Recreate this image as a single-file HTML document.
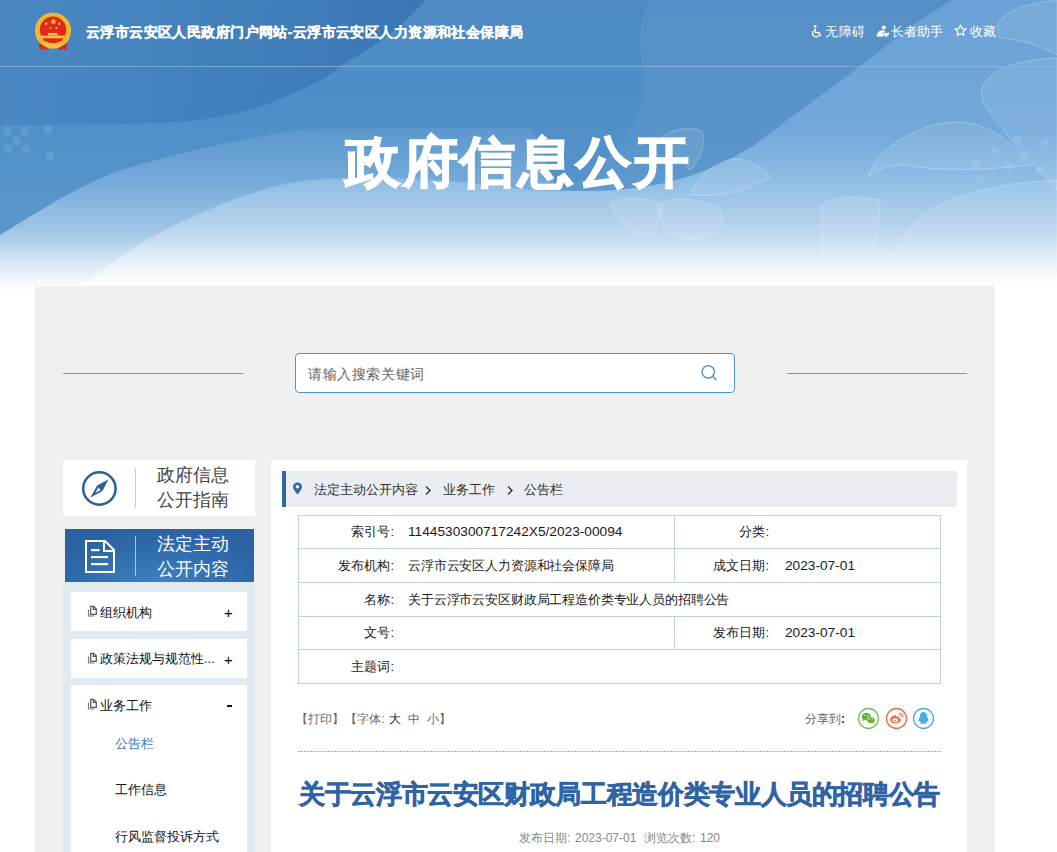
<!DOCTYPE html>
<html><head><meta charset="utf-8">
<style>
*{margin:0;padding:0;box-sizing:border-box}
html,body{width:1057px;height:852px;overflow:hidden;background:#fff}
body{font-family:"Liberation Sans",sans-serif;position:relative;color:#333}
.abs{position:absolute}
#banner{left:0;top:0;width:1057px;height:290px;overflow:hidden;
 background:linear-gradient(180deg,#4c88c2 0px,#4f8cc5 120px,#6ea1d2 175px,#a9c8e6 222px,#e4eef8 262px,#ffffff 288px)}
.t{position:absolute;white-space:nowrap;line-height:1}
#panel{left:35px;top:286px;width:960px;height:566px;background:#f0f0f0}
.side{font-size:13px;color:#111}
.cell{position:absolute;font-size:13px;color:#1a1a1a;line-height:1;white-space:nowrap}
.hl{position:absolute;height:1px;background:#b9d2e8}
.vl{position:absolute;width:1px;background:#b9d2e8}
</style></head><body>
<div id="banner" class="abs">
<svg width="1057" height="290" viewBox="0 0 1057 290" style="position:absolute;left:0;top:0">
 <defs>
  <linearGradient id="g0" gradientUnits="userSpaceOnUse" x1="0" y1="0" x2="0" y2="290">
   <stop offset="0" stop-color="#6aa1d6"/>
   <stop offset="0.45" stop-color="#72a8da"/>
   <stop offset="0.62" stop-color="#8ebde4"/>
   <stop offset="0.76" stop-color="#b2d0ec"/>
   <stop offset="0.86" stop-color="#cfe2f3"/>
   <stop offset="0.97" stop-color="#f4f8fc"/>
   <stop offset="1" stop-color="#ffffff"/>
  </linearGradient>
  <linearGradient id="g1" gradientUnits="userSpaceOnUse" x1="0" y1="0" x2="0" y2="290">
   <stop offset="0" stop-color="#5893ca"/>
   <stop offset="0.45" stop-color="#5d98cd"/>
   <stop offset="0.62" stop-color="#74a9d9"/>
   <stop offset="0.8" stop-color="#a3c7e8"/>
   <stop offset="0.95" stop-color="#d9e8f5"/>
  </linearGradient>
  <linearGradient id="g2" gradientUnits="userSpaceOnUse" x1="0" y1="0" x2="0" y2="290">
   <stop offset="0" stop-color="#4d8ac4"/>
   <stop offset="0.5" stop-color="#5190c8"/>
   <stop offset="0.7" stop-color="#5a96cc"/>
  </linearGradient>
  <linearGradient id="gd" gradientUnits="userSpaceOnUse" x1="0" y1="20" x2="400" y2="60">
   <stop offset="0" stop-color="#4b88c2"/>
   <stop offset="0.6" stop-color="#4280bc"/>
   <stop offset="1" stop-color="#3b77b5"/>
  </linearGradient>
  <linearGradient id="fade" gradientUnits="userSpaceOnUse" x1="0" y1="0" x2="0" y2="290">
   <stop offset="0" stop-color="#fff" stop-opacity="0"/>
   <stop offset="0.82" stop-color="#fff" stop-opacity="0"/>
   <stop offset="0.93" stop-color="#fff" stop-opacity="0.35"/>
   <stop offset="1" stop-color="#fff" stop-opacity="0.95"/>
  </linearGradient>
 </defs>
 <rect width="1057" height="290" fill="url(#g0)"/>
 <path d="M0,0 H952 L912,25 C870,60 800,110 754,145 C700,180 620,195 530,190 C420,175 350,176 300,181 C250,190 200,212 150,238 C120,255 95,275 75,292 L0,292 Z" fill="url(#g1)"/>
 <path d="M0,0 H952 L912,25 C870,60 800,110 754,145 C700,180 640,195 557,190 C545,160 540,140 530,128 C420,128 340,128 300,130 C230,140 170,155 121,170 C80,185 40,210 0,235 Z" fill="url(#g2)"/>
 <path d="M649,0 C630,40 650,80 640,110 C625,150 590,180 557,190 C640,195 700,180 754,145 C800,110 870,60 912,25 L952,0 Z" fill="#ffffff" opacity="0.05"/>
 <g fill="#ffffff" fill-opacity="0.09" stroke="#ffffff" stroke-opacity="0.25" stroke-width="1">
  <path d="M1000,38 C990,20 1010,5 1057,0 V55 C1040,45 1020,40 1000,38 Z"/>
  <path d="M983,102 C975,80 1000,60 1057,58 V190 C1030,160 1000,130 983,102 Z"/>
  <path d="M868,177 C880,145 920,122 960,122 C990,124 1010,140 1030,165 C990,170 940,172 905,165 C890,165 875,170 868,177 Z"/>
  <path d="M905,235 C930,200 980,185 1057,180 V290 H880 C885,270 895,250 905,235 Z"/>
  <path d="M822,205 C840,195 860,197 880,200 C880,240 870,270 860,290 H822 Z"/>
  <path d="M663,136 C675,128 695,126 702,132 C706,145 700,160 690,170 C680,160 670,148 663,136 Z"/>
  <path d="M690,195 C700,170 725,155 745,160 C760,165 768,172 770,177 C750,190 720,198 690,195 Z"/>
  <path d="M657,205 C670,195 700,198 720,210 C728,225 715,240 690,240 C670,238 658,225 657,205 Z"/>
  <path d="M610,204 C625,195 650,198 663,205 C660,220 655,232 645,238 C628,228 615,218 610,204 Z"/>
 </g>
 <g fill="#ffffff" fill-opacity="0.1">
  <circle cx="1018" cy="140" r="4"/><circle cx="1045" cy="142" r="4"/><circle cx="995" cy="150" r="4"/><circle cx="1025" cy="155" r="4"/>
  <circle cx="975" cy="163" r="4"/><circle cx="1010" cy="168" r="4"/><circle cx="980" cy="180" r="4"/><circle cx="1040" cy="170" r="4"/>
  <circle cx="7" cy="131" r="4.5"/><circle cx="25" cy="131" r="4.5"/><circle cx="48" cy="130" r="4.5"/><circle cx="17" cy="141" r="4.5"/><circle cx="26" cy="149" r="4.5"/><circle cx="50" cy="156" r="4.5"/><circle cx="8" cy="149" r="4.5"/>
 </g>
 <path d="M0,0 H425 C400,30 370,50 346,62 C330,75 315,85 300,90 C250,115 200,123 150,123 C100,125 50,125 0,125 Z" fill="url(#gd)"/>
 <rect width="1057" height="290" fill="url(#fade)"/>
 <line x1="0" y1="66.5" x2="1057" y2="66.5" stroke="#8dbbe4" stroke-opacity="0.7" stroke-width="1"/>
</svg>
</div>
<!-- header -->
<svg class="abs" style="left:30px;top:8px" width="46" height="46" viewBox="0 0 46 46">
 <path d="M10 32 L9 41.8 L13.5 40.5 L16.5 42.5 L19 36 Z" fill="#d9241b"/>
 <path d="M36 32 L37 41.8 L32.5 40.5 L29.5 42.5 L27 36 Z" fill="#d9241b"/>
 <circle cx="23" cy="22.6" r="17.9" fill="#f1b62c"/>
 <circle cx="23" cy="22.6" r="17.4" fill="none" stroke="#f8d456" stroke-width="1.2" stroke-dasharray="1.2 1.6" opacity="0.8"/>
 <circle cx="23" cy="21.8" r="13.2" fill="#e1271e"/>
 <rect x="18" y="25" width="9.6" height="2.3" fill="#f6c93e"/>
 <rect x="11.3" y="27.6" width="23.4" height="2.9" fill="#f6c63a"/>
 <path d="M12.5 30.5 H33.5 L31.5 33.6 H14.5 Z" fill="#e1271e"/>
 <path d="M15 34.5 Q23 39 31 34.5 L30 38.5 Q23 42.5 16 38.5 Z" fill="#f4c235"/>
 <path d="M23.4 10.3 L24.3 12.5 L26.7 12.6 L24.9 14.1 L25.5 16.4 L23.4 15.1 L21.3 16.4 L21.9 14.1 L20.1 12.6 L22.5 12.5 Z" fill="#f7d23e"/>
 <circle cx="16.2" cy="15.7" r="1.2" fill="#f7d23e"/>
 <circle cx="29.4" cy="15.7" r="1.2" fill="#f7d23e"/>
 <circle cx="20.5" cy="20" r="1" fill="#f2c438"/>
 <circle cx="26.5" cy="20" r="1" fill="#f2c438"/>
</svg>
<div class="t" style="left:86px;top:25px;font-size:14px;font-weight:bold;color:#fff;letter-spacing:0.41px;-webkit-text-stroke:0.3px #fff">云浮市云安区人民政府门户网站-云浮市云安区人力资源和社会保障局</div>
<svg class="abs" style="left:810px;top:24px" width="14" height="14" viewBox="0 0 14 14">
 <circle cx="5.2" cy="2.2" r="1.3" fill="#fff"/>
 <path d="M5.2 4.2 V8.6 H9 L10.8 12.2" fill="none" stroke="#fff" stroke-width="1.4" stroke-linejoin="round"/>
 <path d="M3.6 6.6 A3.6 3.6 0 1 0 9.2 11" fill="none" stroke="#fff" stroke-width="1.3"/>
</svg>
<div class="t" style="left:825px;top:25px;font-size:13px;color:#fff;letter-spacing:0.5px">无障碍</div>
<svg class="abs" style="left:876px;top:25px" width="14" height="13" viewBox="0 0 14 13">
 <circle cx="7.8" cy="2.5" r="2.1" fill="#fff"/>
 <path d="M0.6 11.6 C0.9 8.6 2.6 5.4 6.2 5.2 C7.6 5.1 8.6 5.6 9.2 6.4 L7.6 11.6 Z" fill="#fff"/>
 <path d="M10.2 12.6 L7.3 9.8 C6.3 8.8 6.9 7.2 8.2 7.2 C9.1 7.2 9.8 7.8 10.2 8.4 C10.6 7.8 11.3 7.2 12.2 7.2 C13.5 7.2 14.1 8.8 13.1 9.8 Z" fill="#fff" stroke="#5e98cd" stroke-width="0.8"/>
</svg>
<div class="t" style="left:891px;top:25px;font-size:13px;color:#fff">长者助手</div>
<svg class="abs" style="left:954px;top:24px" width="13" height="13" viewBox="0 0 13 13">
 <path d="M6.5 1 L8.1 4.6 L12 5 L9.1 7.6 L9.9 11.5 L6.5 9.5 L3.1 11.5 L3.9 7.6 L1 5 L4.9 4.6 Z" fill="none" stroke="#fff" stroke-width="1.2" stroke-linejoin="round"/>
</svg>
<div class="t" style="left:970px;top:25px;font-size:13px;color:#fff">收藏</div>
<div class="t" style="left:345px;top:135px;font-size:55px;font-weight:bold;color:#fff;letter-spacing:2.7px;-webkit-text-stroke:1.5px #fff">政府信息公开</div>

<div id="panel" class="abs"></div>
<!-- search -->
<div class="abs" style="left:63px;top:373px;width:180px;height:1px;background:#5b9bd0"></div>
<div class="abs" style="left:787px;top:373px;width:180px;height:1px;background:#5b9bd0"></div>
<div class="abs" style="left:295px;top:353px;width:440px;height:40px;border:1px solid #4d93cc;border-radius:4px;background:#fff"></div>
<div class="t" style="left:308px;top:367px;font-size:14px;color:#666;letter-spacing:0.6px">请输入搜索关键词</div>
<svg class="abs" style="left:700px;top:364px" width="18" height="18" viewBox="0 0 18 18"><circle cx="8.3" cy="7.8" r="6.2" fill="none" stroke="#4b90c9" stroke-width="1.4"/><line x1="12.6" y1="12.2" x2="16" y2="15.6" stroke="#4b90c9" stroke-width="1.4" stroke-linecap="round"/></svg>

<!-- sidebar -->
<div class="abs" style="left:63px;top:460px;width:192px;height:56px;background:#fff"></div>
<svg class="abs" style="left:80px;top:469px" width="40" height="40" viewBox="0 0 40 40">
 <circle cx="19.4" cy="19.5" r="16.2" fill="none" stroke="#2b6099" stroke-width="2.5"/>
 <polygon points="28.5,10.5 17,16.5 22.5,22" fill="#2b6099"/>
 <polygon points="17,16.5 22.5,22 10.5,28.5" fill="#2b6099"/>
 <polygon points="18.2,18.8 20.6,21.1 15.5,23.8" fill="#fff"/>
</svg>
<div class="abs" style="left:135px;top:468px;width:1px;height:40px;background:#d0d0d0"></div>
<div class="t" style="left:157px;top:463px;font-size:18px;color:#444;line-height:25px">政府信息<br>公开指南</div>

<div class="abs" style="left:65px;top:529px;width:189px;height:53px;background:radial-gradient(ellipse 120px 60px at 95px 60px,#3f86c9 0%,#3270b0 55%,#2c62a2 100%)"></div>
<svg class="abs" style="left:84px;top:539px" width="32" height="36" viewBox="0 0 32 36">
 <path d="M2 2 H21 L30 11 V33 H2 Z" fill="none" stroke="#fff" stroke-width="2"/>
 <path d="M20 2 V12 H30" fill="none" stroke="#fff" stroke-width="2"/>
 <rect x="7" y="10" width="8.5" height="2.2" fill="#fff"/>
 <rect x="7" y="17" width="17" height="2.2" fill="#fff"/>
 <rect x="7" y="24" width="17" height="2.2" fill="#fff"/>
</svg>
<div class="abs" style="left:135px;top:536px;width:1px;height:40px;background:rgba(230,220,200,0.8)"></div>
<div class="t" style="left:157px;top:532px;font-size:18px;color:#fff;line-height:25px">法定主动<br>公开内容</div>

<div class="abs" style="left:63px;top:582px;width:192px;height:270px;background:#e1eaf0"></div>
<div class="abs" style="left:71px;top:592px;width:176px;height:39px;background:#fff"></div>
<div class="abs" style="left:71px;top:639px;width:176px;height:39px;background:#fff"></div>
<div class="abs" style="left:71px;top:685px;width:176px;height:200px;background:#fff"></div>
<svg class="abs" style="left:87px;top:605px" width="11" height="12" viewBox="0 0 11 12"><path d="M3.7 1.4 H6.6 L9.3 4.1 V9.3 H3.7 Z" fill="none" stroke="#555" stroke-width="1.2"/><path d="M6.3 1.4 V4.4 H9.3" fill="none" stroke="#555" stroke-width="1.2"/><path d="M1.5 4.6 V11 H7.4" fill="none" stroke="#7a7a7a" stroke-width="1.2"/></svg>
<div class="t side" style="left:100px;top:606px">组织机构</div>
<div class="t side" style="left:224px;top:605px;font-size:15px;color:#000">+</div>
<svg class="abs" style="left:87px;top:652px" width="11" height="12" viewBox="0 0 11 12"><path d="M3.7 1.4 H6.6 L9.3 4.1 V9.3 H3.7 Z" fill="none" stroke="#555" stroke-width="1.2"/><path d="M6.3 1.4 V4.4 H9.3" fill="none" stroke="#555" stroke-width="1.2"/><path d="M1.5 4.6 V11 H7.4" fill="none" stroke="#7a7a7a" stroke-width="1.2"/></svg>
<div class="t side" style="left:100px;top:652px">政策法规与规范性...</div>
<div class="t side" style="left:224px;top:652px;font-size:15px;color:#000">+</div>
<svg class="abs" style="left:87px;top:698px" width="11" height="12" viewBox="0 0 11 12"><path d="M3.7 1.4 H6.6 L9.3 4.1 V9.3 H3.7 Z" fill="none" stroke="#555" stroke-width="1.2"/><path d="M6.3 1.4 V4.4 H9.3" fill="none" stroke="#555" stroke-width="1.2"/><path d="M1.5 4.6 V11 H7.4" fill="none" stroke="#7a7a7a" stroke-width="1.2"/></svg>
<div class="t side" style="left:100px;top:699px">业务工作</div>
<div class="abs" style="left:227px;top:705px;width:5px;height:2px;background:#111"></div>
<div class="t side" style="left:115px;top:737px;color:#3b79b7">公告栏</div>
<div class="t side" style="left:115px;top:783px">工作信息</div>
<div class="t side" style="left:115px;top:830px">行风监督投诉方式</div>

<!-- content -->
<div class="abs" style="left:271px;top:460px;width:696px;height:392px;background:#fff"></div>
<div class="abs" style="left:282px;top:471px;width:675px;height:36px;background:#eaeef2;border-left:4px solid #2e67a3"></div>
<svg class="abs" style="left:292px;top:482px" width="11" height="13" viewBox="0 0 11 13"><path d="M5.5 0.5C2.8 0.5 1 2.4 1 4.8 1 7.6 5.5 12.5 5.5 12.5S10 7.6 10 4.8C10 2.4 8.2 0.5 5.5 0.5Z" fill="#2e6aa6"/><circle cx="5.5" cy="4.7" r="1.8" fill="#fff"/></svg>
<div class="t" style="left:314px;top:483px;font-size:13px;color:#333">法定主动公开内容</div>
<svg class="abs" style="left:424px;top:485px" width="8" height="11" viewBox="0 0 8 11"><path d="M2 1.5 L6 5.5 L2 9.5" fill="none" stroke="#333" stroke-width="1.4"/></svg>
<div class="t" style="left:443px;top:483px;font-size:13px;color:#333">业务工作</div>
<svg class="abs" style="left:506px;top:485px" width="8" height="11" viewBox="0 0 8 11"><path d="M2 1.5 L6 5.5 L2 9.5" fill="none" stroke="#333" stroke-width="1.4"/></svg>
<div class="t" style="left:524px;top:483px;font-size:13px;color:#333">公告栏</div>

<!-- table -->
<div class="hl" style="left:298px;top:515px;width:643px"></div>
<div class="hl" style="left:298px;top:548px;width:643px"></div>
<div class="hl" style="left:298px;top:582px;width:643px"></div>
<div class="hl" style="left:298px;top:616px;width:643px"></div>
<div class="hl" style="left:298px;top:649px;width:643px"></div>
<div class="hl" style="left:298px;top:683px;width:643px"></div>
<div class="vl" style="left:298px;top:515px;height:169px"></div>
<div class="vl" style="left:940px;top:515px;height:169px"></div>
<div class="vl" style="left:674px;top:515px;height:68px"></div>
<div class="vl" style="left:674px;top:616px;height:34px"></div>

<div class="cell" style="right:663px;top:525px">索引号:</div>
<div class="cell" style="left:408px;top:525px;font-size:13.7px">1144530300717242X5/2023-00094</div>
<div class="cell" style="right:288px;top:525px">分类:</div>
<div class="cell" style="right:663px;top:559px">发布机构:</div>
<div class="cell" style="left:408px;top:559px;letter-spacing:-0.15px">云浮市云安区人力资源和社会保障局</div>
<div class="cell" style="right:288px;top:559px">成文日期:</div>
<div class="cell" style="left:785px;top:559px;font-size:13.7px">2023-07-01</div>
<div class="cell" style="right:663px;top:593px">名称:</div>
<div class="cell" style="left:408px;top:593px;letter-spacing:-0.15px">关于云浮市云安区财政局工程造价类专业人员的招聘公告</div>
<div class="cell" style="right:663px;top:626px">文号:</div>
<div class="cell" style="right:288px;top:626px">发布日期:</div>
<div class="cell" style="left:785px;top:626px;font-size:13.7px">2023-07-01</div>
<div class="cell" style="right:663px;top:660px">主题词:</div>

<!-- tools -->
<div class="t" style="left:296px;top:713px;font-size:12px;color:#666">【打印】</div>
<div class="t" style="left:345px;top:713px;font-size:12px;color:#666;letter-spacing:0.2px">【字体: <span style="color:#222">大</span>&nbsp; 中&nbsp; 小】</div>
<div class="t" style="left:805px;top:713px;font-size:12px;color:#666">分享到<b style="color:#222">:</b></div>
<svg class="abs" style="left:857px;top:707px" width="23" height="23" viewBox="0 0 23 23">
 <circle cx="11.5" cy="11.5" r="10" fill="none" stroke="#77c258" stroke-width="1.3"/>
 <ellipse cx="9.3" cy="9.6" rx="4.6" ry="3.8" fill="#62b23f"/>
 <path d="M6 12 L5.4 14.2 L8 12.8 Z" fill="#62b23f"/>
 <ellipse cx="14" cy="13.2" rx="4.2" ry="3.4" fill="#fff"/>
 <ellipse cx="14" cy="13.2" rx="3.7" ry="3" fill="#62b23f"/>
 <path d="M16.5 15 L17.4 17 L15 15.8 Z" fill="#62b23f"/>
 <circle cx="7.8" cy="8.6" r="0.6" fill="#fff"/><circle cx="10.8" cy="8.6" r="0.6" fill="#fff"/>
 <circle cx="12.7" cy="12.6" r="0.5" fill="#fff"/><circle cx="15.3" cy="12.6" r="0.5" fill="#fff"/>
</svg>
<svg class="abs" style="left:885px;top:707px" width="23" height="23" viewBox="0 0 23 23">
 <circle cx="11.5" cy="11.5" r="10" fill="none" stroke="#f26a3c" stroke-width="1.3"/>
 <path d="M10 8.2 C7 8.5 4.8 11 5.3 13.5 C5.8 16 9 16.8 11.5 16.3 C14.8 15.6 16.5 13.5 15.6 12 C15.2 11.3 14.3 11.3 14 11.2 C14.4 10.2 14.2 9.4 13 9.4 C12.3 9.4 11.6 9.7 11.3 9.8 C11.5 8.8 11.2 8.1 10 8.2 Z" fill="#f2683a"/>
 <ellipse cx="10.2" cy="13.3" rx="2.8" ry="2" fill="#fff"/>
 <circle cx="9.8" cy="13.5" r="1" fill="#f2683a"/>
 <path d="M14.2 6.2 C16.2 6 17.8 7.6 17.6 9.6" fill="none" stroke="#f2683a" stroke-width="1.1" stroke-linecap="round"/>
 <path d="M14.2 7.9 C15.2 7.8 16 8.6 15.9 9.5" fill="none" stroke="#f2683a" stroke-width="0.9" stroke-linecap="round"/>
</svg>
<svg class="abs" style="left:912px;top:707px" width="23" height="23" viewBox="0 0 23 23">
 <circle cx="11.5" cy="11.5" r="10" fill="none" stroke="#4aaee4" stroke-width="1.3"/>
 <path d="M11.5 5 C9 5 8 6.8 8 8.8 C8 9.6 7.4 10.2 7.2 11 C6.6 12.2 6.3 13.6 6.8 14.8 C7.3 14.6 7.6 14.2 7.8 13.8 C8 14.8 8.6 15.6 9 15.9 C8.3 16.2 8.2 16.9 9 17 C10 17.1 10.8 16.9 11.5 16.6 C12.2 16.9 13 17.1 14 17 C14.8 16.9 14.7 16.2 14 15.9 C14.4 15.6 15 14.8 15.2 13.8 C15.4 14.2 15.7 14.6 16.2 14.8 C16.7 13.6 16.4 12.2 15.8 11 C15.6 10.2 15 9.6 15 8.8 C15 6.8 14 5 11.5 5 Z" fill="#4aaee4"/>
</svg>
<div class="abs" style="left:298px;top:751px;width:643px;height:1px;background:repeating-linear-gradient(90deg,#a8a8a8 0 2px,transparent 2px 3px)"></div>

<div class="t" style="left:299px;top:781px;font-size:26px;font-weight:bold;color:#2e64a6;letter-spacing:-0.36px;-webkit-text-stroke:0.6px #2e64a6">关于云浮市云安区财政局工程造价类专业人员的招聘公告</div>
<div class="t" style="left:519px;top:832px;font-size:12px;color:#888">发布日期:</div>
<div class="t" style="left:575px;top:832px;font-size:12px;color:#888">2023-07-01</div>
<div class="t" style="left:644px;top:832px;font-size:12px;color:#888">浏览次数:</div>
<div class="t" style="left:700px;top:832px;font-size:12px;color:#888">120</div>
</body></html>
